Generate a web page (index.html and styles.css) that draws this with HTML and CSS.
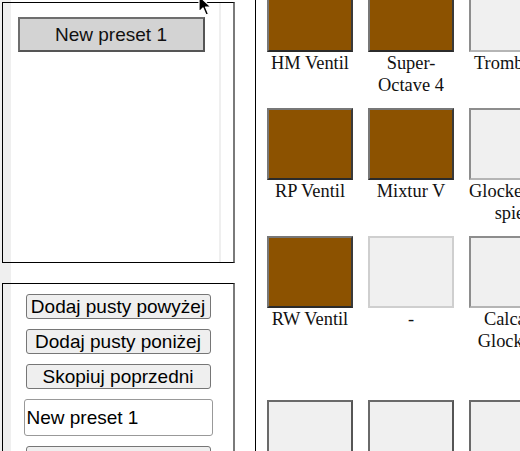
FILE: index.html
```html
<!DOCTYPE html>
<html lang="pl">

<head>
    <meta charset="UTF-8">
    <meta name="viewport" content="width=device-width, initial-scale=1.0">
    <title>Presety</title>

    <link rel="stylesheet" href="styles.css">
</head>

<body>
    <div class="page">
        <div class="sidebar">
            <div class="panel presets">
                <div class="preset-list">
                    <button class="preset">New preset 1</button>
                </div>
            </div>

            <div class="panel actions">
                <button class="action">Dodaj pusty powyżej</button>
                <button class="action">Dodaj pusty poniżej</button>
                <button class="action">Skopiuj poprzedni</button>
                <input type="text" class="preset-name" value="New preset 1">
                <button class="action">Zapisz</button>
            </div>
        </div>

        <div class="stops">
            <div class="stop-grid">
                <div class="stop">
                    <div class="tile on"></div>
                    <div class="label">HM Ventil</div>
                </div>
                <div class="stop">
                    <div class="tile on"></div>
                    <div class="label">Super-Octave 4</div>
                </div>
                <div class="stop">
                    <div class="tile"></div>
                    <div class="label">Trombone</div>
                </div>
                <div class="stop">
                    <div class="tile"></div>
                    <div class="label">Trompete</div>
                </div>

                <div class="stop">
                    <div class="tile on"></div>
                    <div class="label">RP Ventil</div>
                </div>
                <div class="stop">
                    <div class="tile on"></div>
                    <div class="label">Mixtur V</div>
                </div>
                <div class="stop">
                    <div class="tile"></div>
                    <div class="label">Glockenton spiel</div>
                </div>
                <div class="stop">
                    <div class="tile"></div>
                    <div class="label">Tremulant</div>
                </div>

                <div class="stop">
                    <div class="tile on"></div>
                    <div class="label">RW Ventil</div>
                </div>
                <div class="stop">
                    <div class="tile empty"></div>
                    <div class="label">-</div>
                </div>
                <div class="stop">
                    <div class="tile"></div>
                    <div class="label">Calcant Glocken-</div>
                </div>
                <div class="stop">
                    <div class="tile"></div>
                    <div class="label">Zimbelstern</div>
                </div>

                <div class="stop">
                    <div class="tile dark"></div>
                    <div class="label">Bourdon 16</div>
                </div>
                <div class="stop">
                    <div class="tile dark"></div>
                    <div class="label">Principal 8</div>
                </div>
                <div class="stop">
                    <div class="tile dark"></div>
                    <div class="label">Gedackt 8</div>
                </div>
                <div class="stop">
                    <div class="tile dark"></div>
                    <div class="label">Octave 4</div>
                </div>
            </div>
        </div>
    </div>

    <!-- mouse pointer -->
    <svg class="cursor" width="14" height="22" viewBox="0 0 14 22">
        <path d="M1 1 L1 17 L5 13 L8 20 L10.5 19 L7.5 12 L13 12 Z" fill="#000" stroke="#fff" stroke-width="1.2" stroke-linejoin="round" />
    </svg>
</body>

</html>
```

FILE: styles.css
```css
body {
    margin: 0;
    padding: 0;
    background-color: white;
    font-family: "Liberation Sans", Arial, sans-serif;
    overflow: hidden;
}

.page {
    display: flex;
    height: 451px;
    overflow: hidden;
}

/* left column with the presets */
.sidebar {
    width: 255px;
    flex-shrink: 0;
    padding-top: 2px;
    background: linear-gradient(to right, #efefef 11px, white 11px);
}

.panel {
    margin-left: 2px;
    width: 230px;
    border: 1px solid black;
    border-right: 2px solid #7a7a7a;
}

.presets {
    height: 259px;
    display: flex;
}

.preset-list {
    width: 216px;
    border-right: 2px solid #efefef;
    display: flex;
    flex-direction: column;
    align-items: center;
    padding-top: 14px;
}

.preset {
    width: 187px;
    height: 35px;
    background-color: #d3d3d3;
    border: 2px solid #6e6e6e;
    border-right-color: #555;
    border-bottom-color: #555;
    font-family: "Liberation Sans", Arial, sans-serif;
    font-size: 19px;
    color: #111;
    padding: 0;
}

.actions {
    margin-top: 20px;
    height: 200px;
    border-bottom: none;
    display: flex;
    flex-direction: column;
    align-items: center;
    gap: 10px;
    padding-top: 10px;
}

.action {
    width: 185px;
    height: 25px;
    flex-shrink: 0;
    background-color: #efefef;
    border: 1px solid #767676;
    border-radius: 3px;
    font-family: "Liberation Sans", Arial, sans-serif;
    font-size: 19px;
    color: black;
    padding: 0;
}

.preset-name {
    width: 189px;
    height: 37px;
    flex-shrink: 0;
    box-sizing: border-box;
    border: 1px solid #999;
    border-radius: 3px;
    padding: 0 2px;
    font-family: "Liberation Sans", Arial, sans-serif;
    font-size: 19px;
    color: black;
}

/* right column with the stop buttons */
.stops {
    flex: 1;
    border-left: 1px solid black;
    padding-left: 11px;
    overflow: hidden;
}

.stop-grid {
    margin-top: -20px;
    display: grid;
    grid-template-columns: repeat(4, 86px);
    grid-template-rows: 116px 116px 152px auto;
    column-gap: 15px;
    row-gap: 12px;
}

.tile {
    box-sizing: border-box;
    width: 86px;
    height: 72px;
    background-color: #f0f0f0;
    border: 2px solid #8d8d8d;
    border-right-color: #b5b5b5;
    border-bottom-color: #b5b5b5;
}

.tile.on {
    background-color: #8c5200;
    border-color: #777 #3a3a3a #2b2b2b #777;
}

.tile.empty {
    border-color: #cfcfcf;
}

.tile.dark {
    border-color: #6a6a6a #555 #555 #6a6a6a;
}

.label {
    width: 86px;
    font-family: "Liberation Serif", "Times New Roman", serif;
    font-size: 18.4px;
    line-height: 22px;
    text-align: center;
    color: #111;
}

.cursor {
    position: absolute;
    left: 198px;
    top: -5px;
}
```
